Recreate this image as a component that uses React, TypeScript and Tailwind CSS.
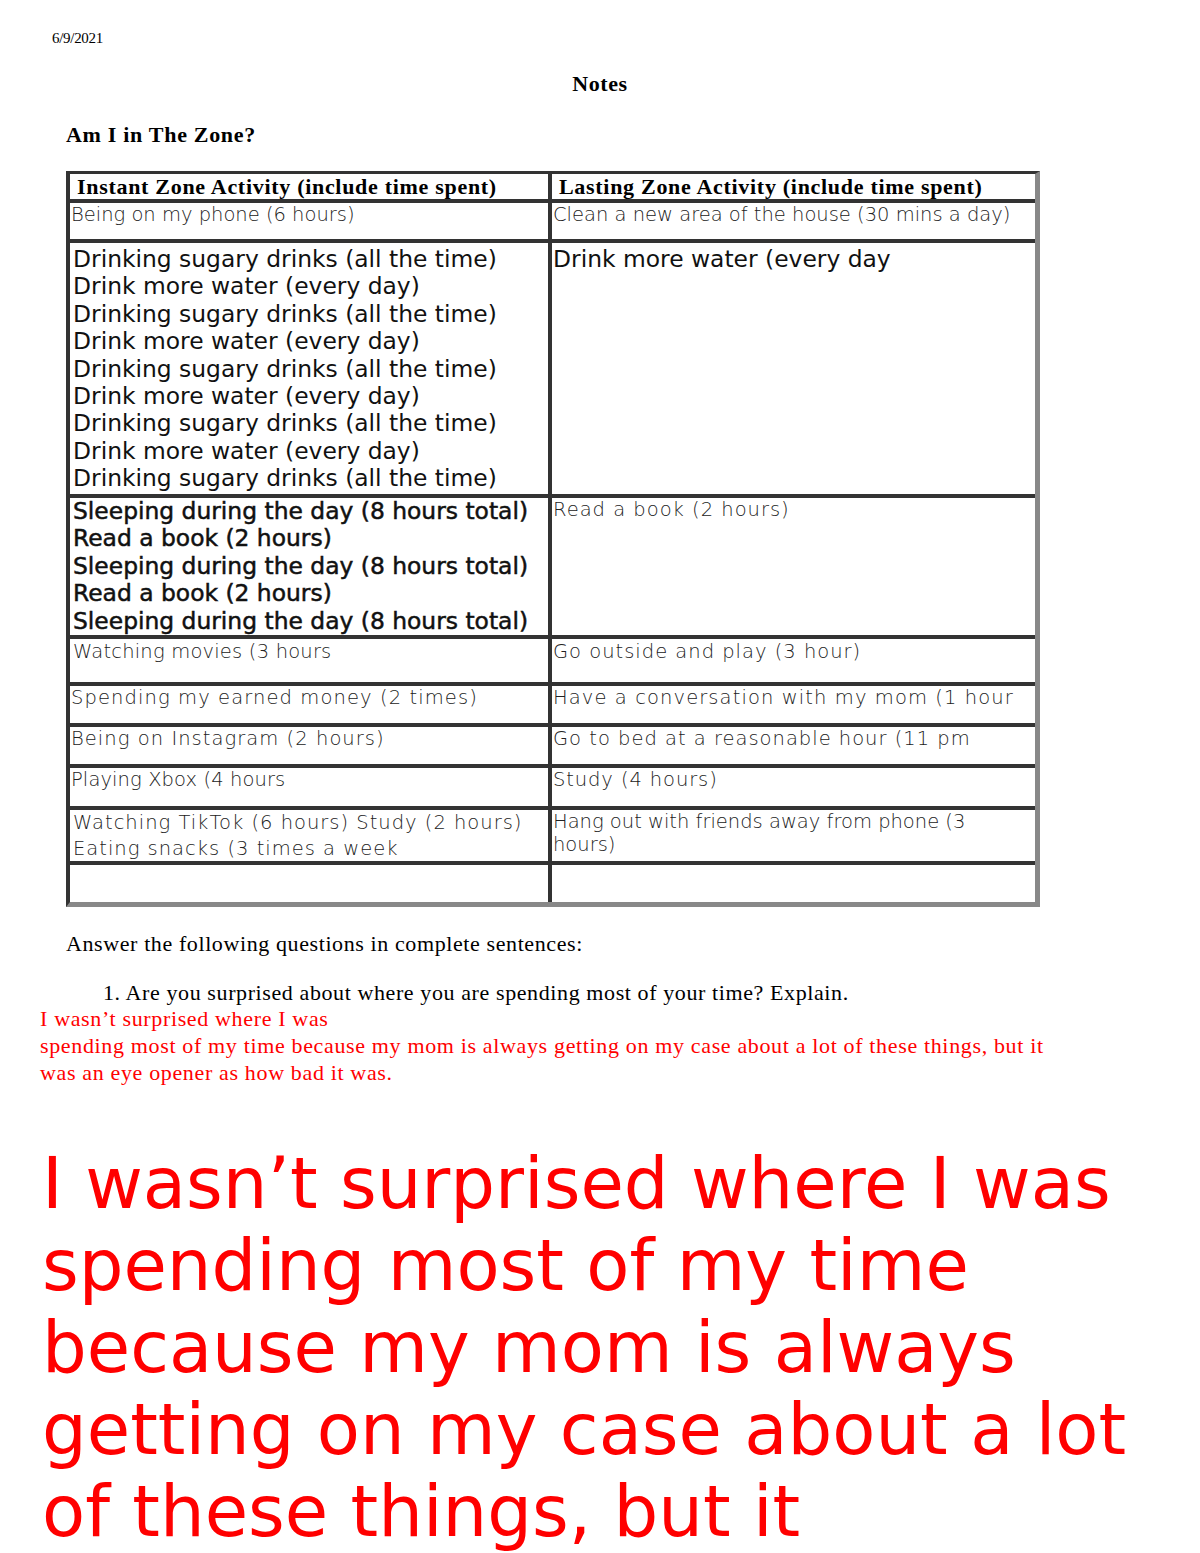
import React from "react";

const serif = "font-['Liberation_Serif',serif]";
const sans = "font-['DejaVu_Sans',sans-serif]";

export default function App() {
  return (
    <div className="w-[1200px] h-[1553px] bg-white text-black overflow-hidden">
      {/* header lines */}
      <div className={`${serif} text-[15px] leading-[16px] tracking-[-0.3px] pt-[30px] pl-[52px]`}>6/9/2021</div>
      <div className={`${serif} text-[22px] leading-[25px] font-bold tracking-[0.6px] text-center mt-[25px]`}>Notes</div>
      <div className={`${serif} text-[22px] leading-[25px] font-bold tracking-[0.7px] pl-[66px] mt-[26px]`}>Am I in The Zone?</div>

      {/* zone table */}
      <div className="ml-[66px] mt-[24px] w-[974px] border-l-4 border-t-[3px] border-r-[5px] border-b-[5px] border-l-[#333] border-t-[#333] border-r-[#888] border-b-[#888] bg-[#333]">
        <div className="grid grid-cols-[478px_483px] gap-x-[4px] gap-y-[4px] bg-[#333]">
          <div className={`${serif} h-[25px] bg-white pl-[7px] text-[22px] leading-[25px] font-bold tracking-[0.7px]`}>Instant Zone Activity (include time spent)</div>
          <div className={`${serif} h-[25px] bg-white pl-[7px] text-[22px] leading-[25px] font-bold tracking-[0.7px]`}>Lasting Zone Activity (include time spent)</div>

          <div className={`${sans} h-[36px] bg-white pl-[1px] text-[19.5px] leading-[23px] font-extralight text-[#222]`}>Being on my phone (6 hours)</div>
          <div className={`${sans} h-[36px] bg-white pl-[1px] text-[19.5px] leading-[23px] font-extralight text-[#222]`}>Clean a new area of the house (30 mins a day)</div>

          <div className={`${sans} h-[251px] bg-white pl-[3px] pt-[3px] text-[23.4px] leading-[27.4px] text-[#111]`}>
            <div>Drinking sugary drinks (all the time)</div>
            <div>Drink more water (every day)</div>
            <div>Drinking sugary drinks (all the time)</div>
            <div>Drink more water (every day)</div>
            <div>Drinking sugary drinks (all the time)</div>
            <div>Drink more water (every day)</div>
            <div>Drinking sugary drinks (all the time)</div>
            <div>Drink more water (every day)</div>
            <div>Drinking sugary drinks (all the time)</div>
          </div>
          <div className={`${sans} h-[251px] bg-white pl-[1px] pt-[3px] text-[23.4px] leading-[27.4px] text-[#111]`}>Drink more water (every day</div>

          <div className={`${sans} h-[137px] bg-white pl-[3px] text-[23.4px] leading-[27.4px] text-[#111] [-webkit-text-stroke:0.5px_#111]`}>
            <div>Sleeping during the day (8 hours total)</div>
            <div>Read a book (2 hours)</div>
            <div>Sleeping during the day (8 hours total)</div>
            <div>Read a book (2 hours)</div>
            <div>Sleeping during the day (8 hours total)</div>
          </div>
          <div className={`${sans} h-[137px] bg-white pl-[1px] text-[19.5px] leading-[23px] tracking-[1px] font-extralight text-[#222]`}>Read a book (2 hours)</div>

          <div className={`${sans} h-[43px] bg-white pl-[3px] pt-[1px] text-[19.5px] leading-[23px] tracking-[0.2px] font-extralight text-[#222]`}>Watching movies (3 hours</div>
          <div className={`${sans} h-[43px] bg-white pl-[1px] pt-[1px] text-[19.5px] leading-[23px] tracking-[1px] font-extralight text-[#222]`}>Go outside and play (3 hour)</div>

          <div className={`${sans} h-[37px] bg-white pl-[1px] text-[19.5px] leading-[23px] tracking-[1.1px] font-extralight text-[#222]`}>Spending my earned money (2 times)</div>
          <div className={`${sans} h-[37px] bg-white pl-[1px] text-[19.5px] leading-[23px] tracking-[1.1px] font-extralight text-[#222]`}>Have a conversation with my mom (1 hour</div>

          <div className={`${sans} h-[37px] bg-white pl-[1px] text-[19.5px] leading-[23px] tracking-[1.05px] font-extralight text-[#222]`}>Being on Instagram (2 hours)</div>
          <div className={`${sans} h-[37px] bg-white pl-[1px] text-[19.5px] leading-[23px] tracking-[1px] font-extralight text-[#222]`}>Go to bed at a reasonable hour (11 pm</div>

          <div className={`${sans} h-[38px] bg-white pl-[1px] text-[19.5px] leading-[23px] tracking-[0.1px] font-extralight text-[#222]`}>Playing Xbox (4 hours</div>
          <div className={`${sans} h-[38px] bg-white pl-[1px] text-[19.5px] leading-[23px] tracking-[0.9px] font-extralight text-[#222]`}>Study (4 hours)</div>

          <div className={`${sans} h-[51px] bg-white pl-[3px] text-[19.5px] leading-[26px] tracking-[1px] font-extralight text-[#222]`}>
            <div>Watching TikTok (6 hours) Study (2 hours)</div>
            <div>Eating snacks (3 times a week</div>
          </div>
          <div className={`${sans} h-[51px] bg-white pl-[1px] text-[19.5px] leading-[23px] font-extralight text-[#222]`}>
            <div>Hang out with friends away from phone (3</div>
            <div>hours)</div>
          </div>

          <div className="h-[37px] bg-white"></div>
          <div className="h-[37px] bg-white"></div>
        </div>
      </div>

      {/* questions */}
      <div className={`${serif} text-[22px] leading-[25px] tracking-[0.6px] pl-[66px] mt-[24px]`}>Answer the following questions in complete sentences:</div>
      <div className={`${serif} text-[22px] leading-[25px] tracking-[0.6px] pl-[103px] mt-[24px]`}>1. Are you surprised about where you are spending most of your time? Explain.</div>
      <div className={`${serif} text-[22px] leading-[27px] tracking-[0.65px] text-[#ff0000] pl-[40px] pr-[140px]`}>
        <div>I wasn’t surprised where I was</div>
        <div>spending most of my time because my mom is always getting on my case about a lot of these things, but it was an eye opener as how bad it was.</div>
      </div>

      {/* enlarged answer */}
      <div className={`${sans} text-[70.5px] leading-[82px] text-[#ff0000] pl-[42px] pr-[20px] mt-[57px]`}>
        <div>I wasn’t surprised where I was</div>
        <div>spending most of my time because my mom is always getting on my case about a lot of these things, but it</div>
      </div>
    </div>
  );
}
